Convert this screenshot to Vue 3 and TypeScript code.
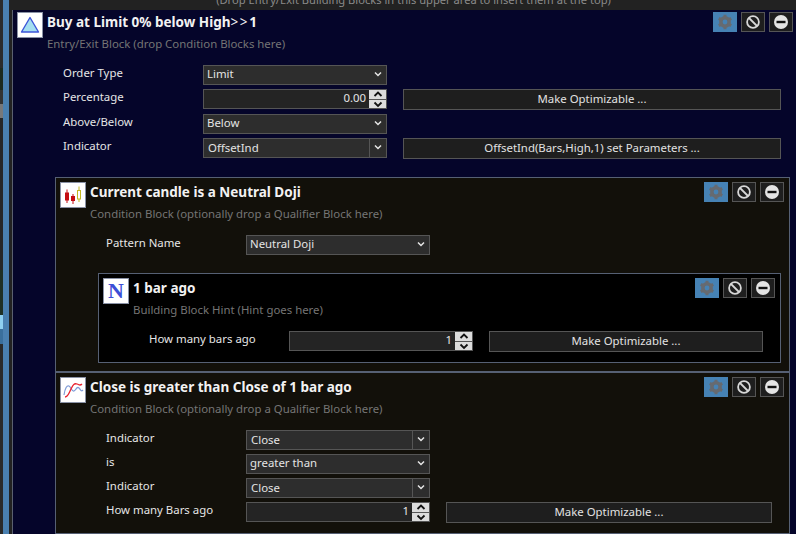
<script setup lang="ts">
import { computed } from 'vue'

defineOptions({ name: 'App' })

type Row = { label: string; kind: 'select' | 'combo' | 'spin'; value: string; action?: string; inset?: boolean }
type Block = {
  kind: 'entry' | 'cond' | 'hint'
  icon: 'triangle' | 'candles' | 'letter' | 'lines'
  title: string
  titleTail?: string
  sub: string
  rows: Row[]
  children?: Block[]
}

const props = defineProps<{ node?: Block }>()

const tree: Block = {
  kind: 'entry',
  icon: 'triangle',
  title: 'Buy at Limit 0% below High',
  titleTail: '>>',
  sub: 'Entry/Exit Block (drop Condition Blocks here)',
  rows: [
    { label: 'Order Type', kind: 'select', value: 'Limit' },
    { label: 'Percentage', kind: 'spin', value: '0.00', action: 'Make Optimizable ...' },
    { label: 'Above/Below', kind: 'select', value: 'Below' },
    { label: 'Indicator', kind: 'combo', value: 'OffsetInd', action: 'OffsetInd(Bars,High,1) set Parameters ...' },
  ],
  children: [
    {
      kind: 'cond',
      icon: 'candles',
      title: 'Current candle is a Neutral Doji',
      sub: 'Condition Block (optionally drop a Qualifier Block here)',
      rows: [{ label: 'Pattern Name', kind: 'select', value: 'Neutral Doji' }],
      children: [
        {
          kind: 'hint',
          icon: 'letter',
          title: '1 bar ago',
          sub: 'Building Block Hint (Hint goes here)',
          rows: [{ label: 'How many bars ago', kind: 'spin', value: '1', action: 'Make Optimizable ...' }],
        },
      ],
    },
    {
      kind: 'cond',
      icon: 'lines',
      title: 'Close is greater than Close of 1 bar ago',
      sub: 'Condition Block (optionally drop a Qualifier Block here)',
      rows: [
        { label: 'Indicator', kind: 'combo', value: 'Close' },
        { label: 'is', kind: 'select', value: 'greater than' },
        { label: 'Indicator', kind: 'combo', value: 'Close' },
        { label: 'How many Bars ago', kind: 'spin', value: '1', action: 'Make Optimizable ...' },
      ],
    },
  ],
}

const block = computed(() => props.node ?? tree)
const bands = [
  { h: 68, c: '#2b2b2b' },
  { h: 22, c: '#1c2a1f' },
  { h: 14, c: '#333333' },
  { h: 14, c: '#77787a' },
  { h: 152, c: '#262626' },
  { h: 45, c: '#1f3024' },
  { h: 14, c: '#8fd0f0' },
  { h: 15, c: '#3a6f9c' },
  { h: 190, c: '#2a2a2a' },
]
</script>

<template>
  <div v-if="!node" class="page">
    <div class="strip">
      <div class="strip-edge">
        <div v-for="(b, i) in bands" :key="i" :style="{ height: b.h + 'px', background: b.c }"></div>
      </div>
      <div class="strip-blue"></div>
      <div class="strip-dark"></div>
    </div>
    <div class="main">
      <div class="drop-bar"><span>(Drop Entry/Exit Building Blocks in this upper area to insert them at the top)</span></div>
      <App :node="tree" />
    </div>
  </div>

  <section v-else class="block" :class="block.kind">
    <header class="head">
      <div class="logo">
        <svg v-if="block.icon === 'triangle'" viewBox="0 0 24 24" width="24" height="24">
          <path d="M12 4.5 L20.5 19 H3.5 Z" fill="#a4def0" stroke="#3c55d8" stroke-width="1.4" stroke-linejoin="round" />
        </svg>
        <svg v-else-if="block.icon === 'candles'" viewBox="0 0 24 24" width="24" height="24">
          <path d="M6 6.5V20M12 11V21" stroke="#c40d12" stroke-width="1" />
          <rect x="4" y="9.5" width="4" height="8" fill="#c40d12" />
          <rect x="10" y="13" width="4" height="5" fill="#c40d12" />
          <path d="M18 3.5V19" stroke="#c4b820" stroke-width="1" />
          <rect x="16.5" y="7.5" width="3" height="8.5" fill="#fff" stroke="#c4b820" stroke-width="1" />
        </svg>
        <span v-else-if="block.icon === 'letter'" class="letter">N</span>
        <svg v-else viewBox="0 0 24 24" width="24" height="24">
          <path d="M3 17 C4 10 6 7 8 8 S11 14 13 13 S16 8 18 10 S20 14 22 12" fill="none" stroke="#7f9bd6" stroke-width="1.2" />
          <path d="M4 19 C7 19 8 15 10 11 S13 5 16 6 S19 8 21 6" fill="none" stroke="#e8222e" stroke-width="1.3" />
        </svg>
      </div>
      <div class="texts">
        <div class="title">{{ block.title }}<span v-if="block.titleTail" class="tail">{{ block.titleTail }}</span><template v-if="block.titleTail">1</template></div>
        <div class="sub">{{ block.sub }}</div>
      </div>
      <div class="tools">
        <div class="tool gear">
          <svg viewBox="0 0 16 16" width="16" height="16">
            <g stroke="#666a70" stroke-width="3">
              <path d="M8 0.8V15.2M1.8 4.4 14.2 11.6M1.8 11.6 14.2 4.4" />
            </g>
            <circle cx="8" cy="8" r="4.4" fill="none" stroke="#666a70" stroke-width="3" />
            <circle cx="8" cy="8" r="2.4" fill="#4682b4" />
          </svg>
        </div>
        <div class="tool">
          <svg viewBox="0 0 16 16" width="16" height="16">
            <circle cx="8" cy="8" r="5.9" fill="none" stroke="#d8d8d8" stroke-width="1.8" />
            <path d="M4 4 12 12" stroke="#d8d8d8" stroke-width="1.8" />
          </svg>
        </div>
        <div class="tool">
          <svg viewBox="0 0 16 16" width="16" height="16">
            <circle cx="8" cy="8" r="7" fill="#e4e4e4" />
            <rect x="3.5" y="6.8" width="9" height="2.4" fill="#111" />
          </svg>
        </div>
      </div>
    </header>

    <div class="form" :class="{ 'with-children': block.children }">
      <template v-for="row in block.rows" :key="row.label + row.value">
        <div class="label">{{ row.label }}</div>
        <div class="field" :class="row.kind">
          <span class="value">{{ row.value }}</span>
          <div v-if="row.kind === 'spin'" class="spin-btns">
            <div class="spin-btn">
              <svg viewBox="0 0 12 8" width="12" height="8"><path d="M2.5 6 6 2.5 9.5 6" fill="none" stroke="#111" stroke-width="1.8" /></svg>
            </div>
            <div class="spin-btn">
              <svg viewBox="0 0 12 8" width="12" height="8"><path d="M2.5 2.5 6 6 9.5 2.5" fill="none" stroke="#111" stroke-width="1.8" /></svg>
            </div>
          </div>
          <div v-else class="arrow">
            <svg viewBox="0 0 10 8" width="10" height="8"><path d="M2 2.5 5 5.5 8 2.5" fill="none" stroke="#e6e6e6" stroke-width="1.5" /></svg>
          </div>
        </div>
        <div class="action-cell">
          <button v-if="row.action" class="action" type="button">{{ row.action }}</button>
        </div>
      </template>
    </div>

    <div v-if="block.children" class="children">
      <App v-for="c in block.children" :key="c.title" :node="c" />
    </div>
  </section>
</template>

<style>
html, body { margin: 0; padding: 0; background: #05052a; overflow: hidden; }
</style>

<style scoped>
.page {
  width: 796px;
  height: 534px;
  overflow: hidden;
  display: flex;
  font-family: "Noto Sans", "Open Sans", sans-serif;
  font-size: 11.4px;
  color: #e2e2e2;
  background: #05052a;
}
.strip { width: 10px; flex: none; display: flex; }
.strip-edge { width: 3px; }
.strip-blue { width: 6px; background: #4a80b0; }
.strip-dark { width: 1px; background: #222; }
.main { flex: none; width: 788px; background: #222; }
.drop-bar {
  height: 10px;
  background: #222;
  color: #8a8a8a;
  font-size: 11.15px;
  overflow: hidden;
  text-align: center;
  white-space: nowrap;
  padding-left: 19px;
  box-sizing: border-box;
}
.drop-bar span { display: block; margin-top: -7px; line-height: 14px; }

.block { box-sizing: border-box; border: 1px solid #566074; }
.block.entry {
  margin-left: 2px;
  width: 786px;
  height: 524px;
  background: #05052a;
  border-top: 0;
  border-right: 0;
  border-bottom: 0;
  border-left-color: #5a6070;
  padding-top: 2px;
}
.block.cond { background: #12100a; }
.block.hint { background: #000; }

.head {
  height: 53px;
  box-sizing: border-box;
  padding: 0 5px 0 4px;
  display: flex;
  align-items: flex-start;
}
.block.cond .head, .block.hint .head { height: 57px; padding-top: 4px; }
.logo {
  box-sizing: border-box;
  width: 26px;
  height: 26px;
  flex: none;
  background: #fff;
  border: 1px solid #8a92a6;
  display: flex;
  align-items: center;
  justify-content: center;
}
.letter {
  font-family: "Liberation Serif", serif;
  font-weight: 700;
  font-size: 22px;
  line-height: 24px;
  color: #3c4fd6;
}
.texts { margin-left: 4px; flex: 1; min-width: 0; }
.title { font-weight: 700; font-size: 13.5px; line-height: 20px; color: #f2f2f2; white-space: nowrap; }
.tail { font-weight: 400; letter-spacing: 1.6px; }
.sub { margin-top: 2px; line-height: 20px; color: #757575; white-space: nowrap; }
.tools { display: flex; gap: 4px; }
.tool {
  box-sizing: border-box;
  width: 24px;
  height: 20px;
  background: #1e1e1e;
  border: 1px solid #555;
  display: flex;
  align-items: center;
  justify-content: center;
}
.tool.gear { background: #4682b4; border-color: #4682b4; }

.form {
  display: grid;
  grid-template-columns: 140px 184px 1fr;
  row-gap: 4px;
  padding: 0 17px 10px 50px;
}
.form.with-children { padding-bottom: 0; }
.label { line-height: 16px; color: #e6e6e6; white-space: nowrap; }
.field {
  box-sizing: border-box;
  height: 20px;
  border: 1px solid #555;
  background: #2d2d2d;
  display: flex;
  align-items: stretch;
}
.value { flex: 1; padding-left: 3px; line-height: 16px; color: #e4e4e4; }
.combo .value { padding-left: 4px; line-height: 18px; }
.spin { background: #242424; }
.spin .value { text-align: right; padding: 0 3px 0 0; }
.arrow { width: 17px; flex: none; display: flex; align-items: center; justify-content: center; padding-bottom: 2px; box-sizing: border-box; }
.combo .arrow { border-left: 1px solid #555; }
.spin-btns { width: 17px; flex: none; display: flex; flex-direction: column; gap: 1px; background: #555; }
.spin-btn { flex: 1; background: #dcdcdc; display: flex; align-items: center; justify-content: center; overflow: hidden; }
.action-cell { padding-left: 16px; display: flex; }
.action {
  flex: 1;
  height: 21px;
  box-sizing: border-box;
  padding: 0 0 2px;
  border: 1px solid #555;
  background: #1e1e1e;
  color: #e2e2e2;
  font: inherit;
  line-height: 16px;
}
.children { padding: 8px 8px 8px 42px; }
.entry > .children { padding-top: 18px; }
.cond > .children { padding-top: 18px; }
</style>
